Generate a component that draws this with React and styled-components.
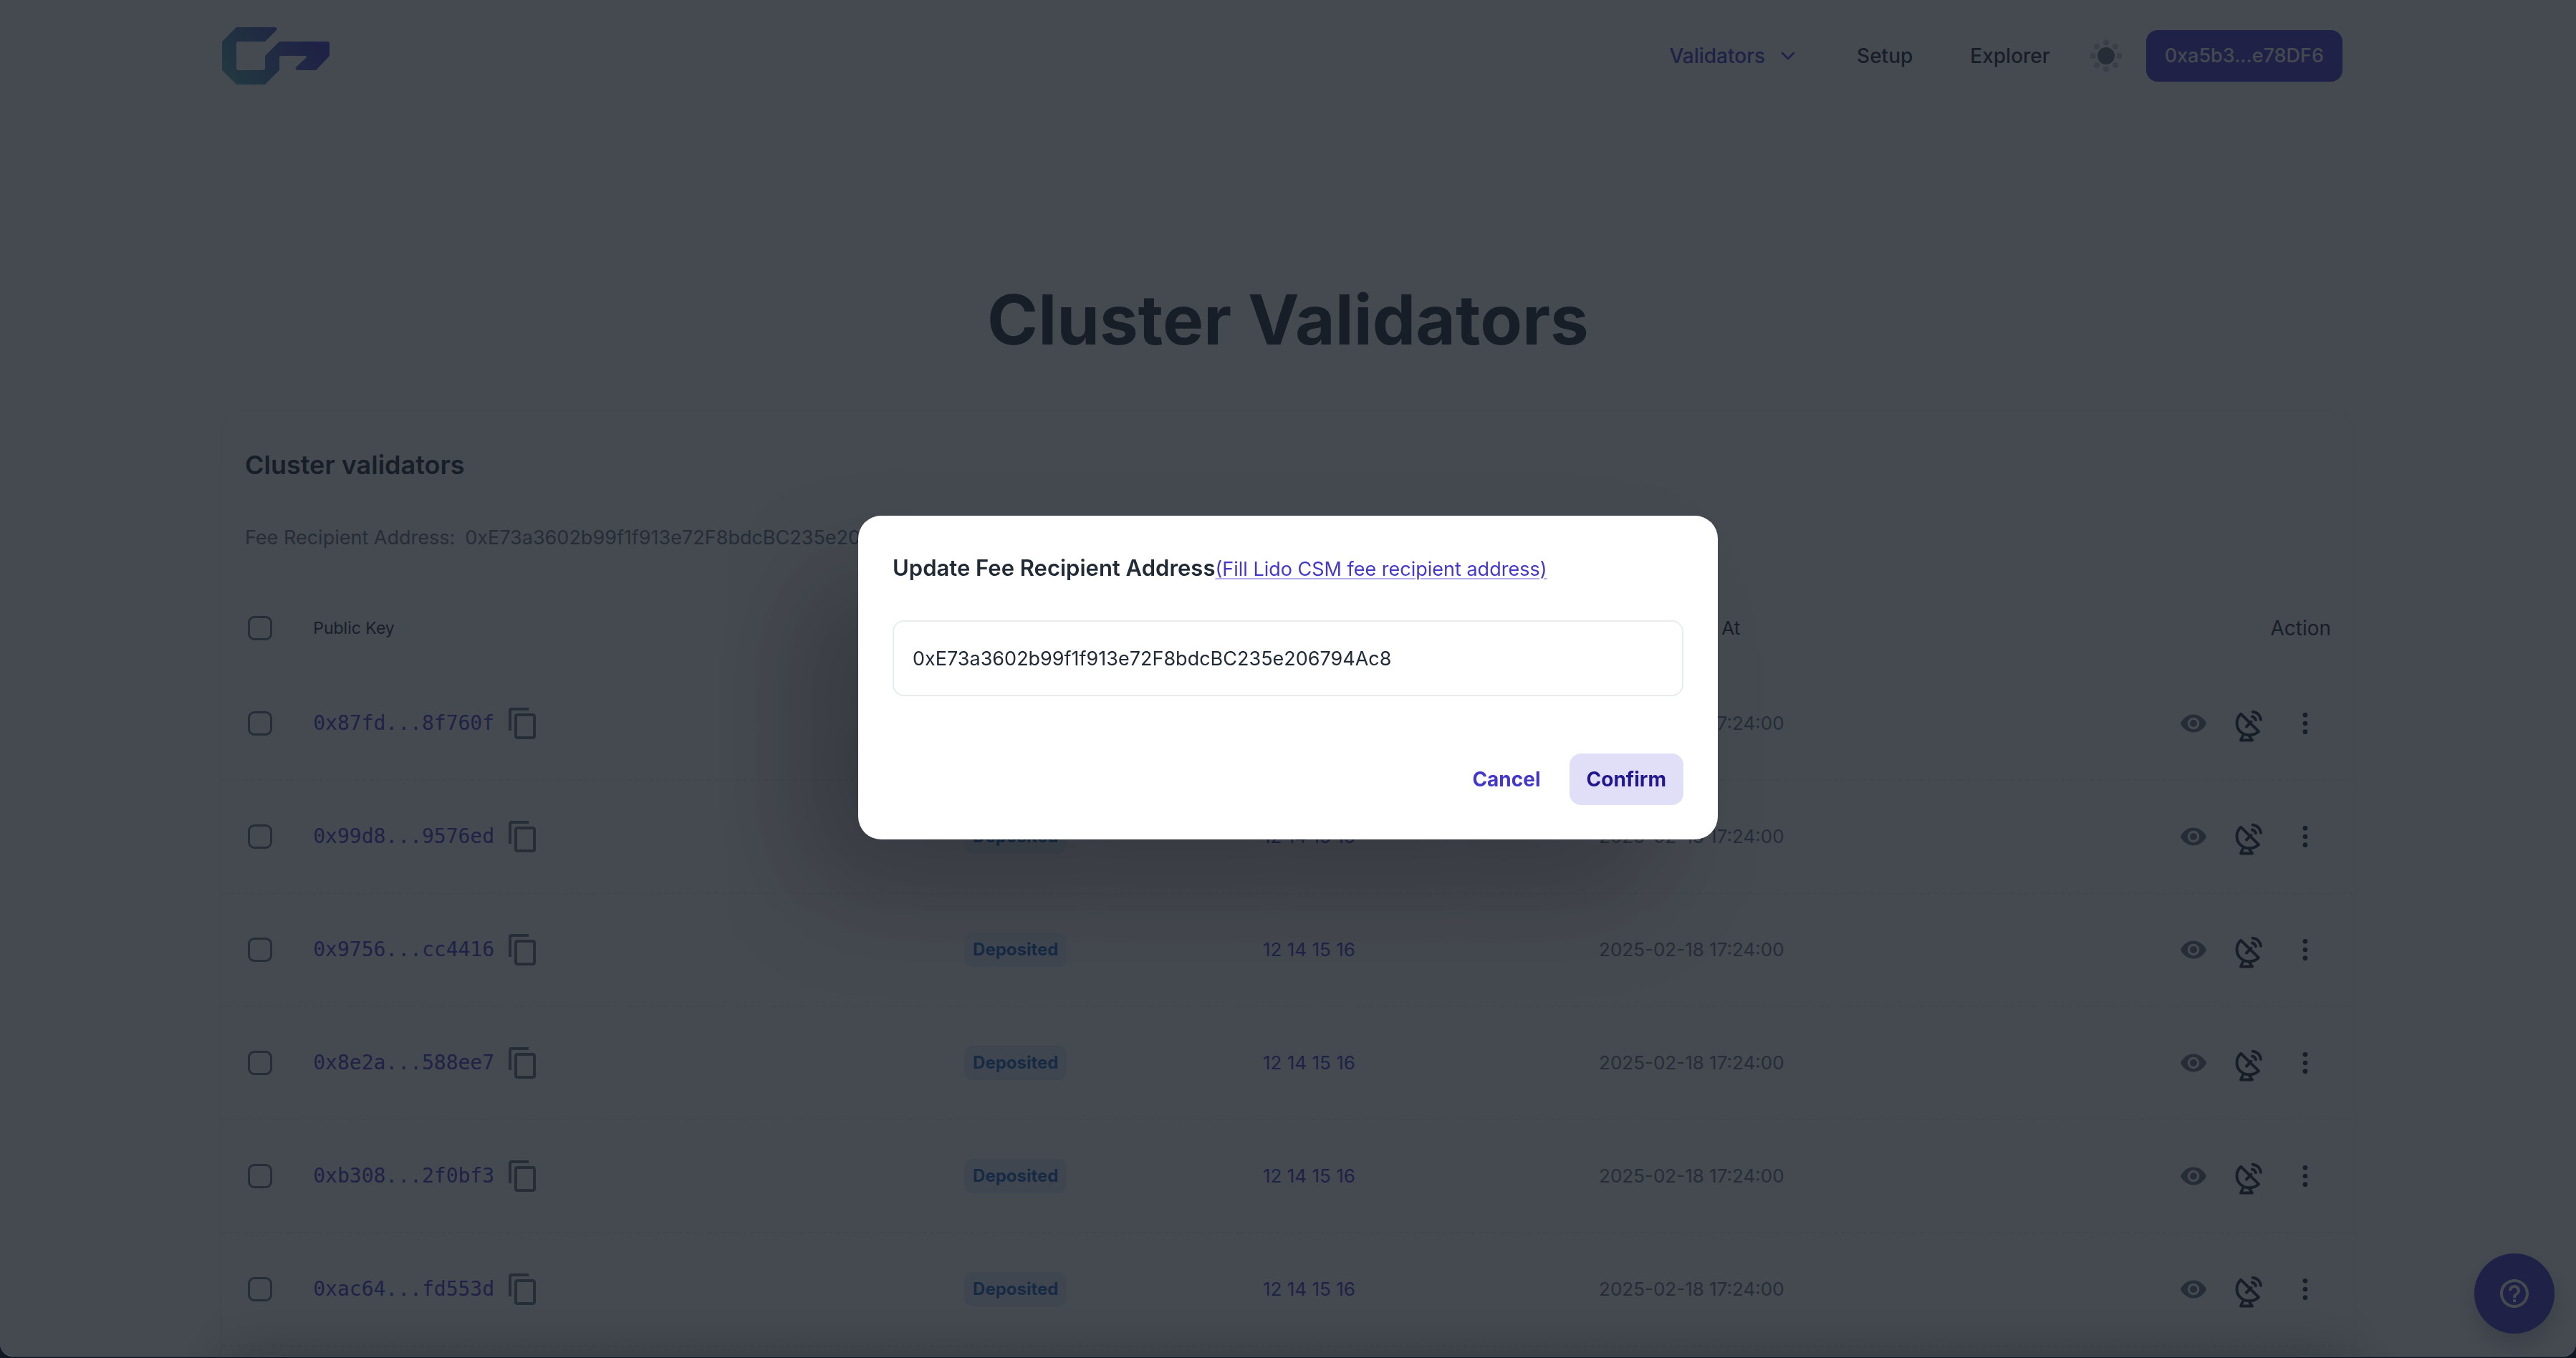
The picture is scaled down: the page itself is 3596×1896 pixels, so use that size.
import React from "react";
import styled, { createGlobalStyle } from "styled-components";
import { ChevronDown } from "lucide-react";
import { MdContentCopy, MdHelpOutline } from "react-icons/md";

const color = {
  primary: "#4338ca",
  primaryDark: "#21188f",
  primarySoft: "#e1dff7",
  text: "#212b36",
  muted: "#637381",
  line: "#e8ecef",
  info: "#1565c0",
};

const GlobalStyle = createGlobalStyle`
  *, *::before, *::after { box-sizing: border-box; }
  html, body { height: 100%; }
  body {
    margin: 0;
    overflow: hidden;
    background: #ffffff;
    color: ${color.text};
    font-family: Inter, "Noto Sans", sans-serif;
    font-size: 27px;
    line-height: 42px;
  }
  button, input { font: inherit; color: inherit; }
  button { border: 0; padding: 0; background: none; cursor: pointer; }
  a { color: inherit; text-decoration: none; }
`;

const Container = styled.div`
  width: 100%;
  max-width: 3072px;
  margin: 0 auto;
  padding: 0 48px;
`;

const Header = styled.header`
  display: flex;
  align-items: center;
  justify-content: space-between;
  height: 156px;
  padding-right: 16px;
`;

const Logo = styled.svg`
  display: block;
  width: 150px;
  height: 80px;
`;

const Tools = styled.div`
  display: flex;
  align-items: center;
  gap: 16px;
`;

const Nav = styled.nav`
  display: flex;
  align-items: center;
  gap: 80px;
  margin-right: 22px;
`;

const NavLink = styled.a`
  display: flex;
  align-items: center;
  gap: 16px;
  font-size: 28px;
  font-weight: 500;
  color: ${(p) => (p.$active ? color.primary : color.text)};
`;

const ThemeButton = styled.button`
  display: grid;
  place-items: center;
  width: 80px;
  height: 80px;
`;

const Button = styled.button`
  height: 72px;
  padding: 0 ${(p) => (p.$strong ? 24 : 26)}px;
  border-radius: 16px;
  font-size: ${(p) => (p.$strong ? 28 : 27)}px;
  font-weight: ${(p) => (p.$strong ? 700 : 500)};
  color: ${(p) => (p.$kind === "solid" ? "#ffffff" : p.$kind === "soft" ? color.primaryDark : color.primary)};
  background: ${(p) => (p.$kind === "solid" ? color.primary : p.$kind === "soft" ? color.primarySoft : "transparent")};
`;

const PageTitle = styled.h1`
  margin: 0;
  padding: 230px 0 68px;
  font-size: 96px;
  line-height: 120px;
  font-weight: 700;
  text-align: center;
`;

const Card = styled.section`
  padding-top: 48px;
  border-radius: 32px;
  background: #ffffff;
  box-shadow: 0 0 4px rgba(145, 158, 171, 0.2), 0 24px 48px -8px rgba(145, 158, 171, 0.08);
`;

const CardTitle = styled.h2`
  margin: 0;
  padding: 0 32px;
  font-size: 36px;
  line-height: 54px;
  font-weight: 600;
`;

const Recipient = styled.p`
  display: flex;
  gap: 14px;
  margin: 0;
  padding: 54px 32px 50px;
  color: ${color.muted};
`;

const Table = styled.table`
  width: 100%;
  table-layout: fixed;
  border-collapse: separate;
  border-spacing: 0;
`;

const HeadCell = styled.th`
  height: 110px;
  padding: 0 32px;
  font-size: ${(p) => p.$size || 26}px;
  font-weight: 400;
  text-align: ${(p) => (p.$right ? "right" : "left")};
  white-space: nowrap;
`;

const Cell = styled.td`
  height: 158px;
  padding: 0 32px;
  border-bottom: 2px dashed rgba(145, 158, 171, 0.16);
  font-size: 26px;
  color: ${(p) => (p.$accent ? color.primary : color.muted)};
  white-space: nowrap;
`;

const Checkbox = styled.input.attrs({ type: "checkbox" })`
  appearance: none;
  display: block;
  width: 34px;
  height: 34px;
  margin: 0 0 0 4px;
  border: 3px solid ${color.muted};
  border-radius: 9px;
`;

const KeyGroup = styled.div`
  display: flex;
  align-items: center;
  gap: 16px;
`;

const KeyLink = styled.a`
  font-family: "DejaVu Sans Mono", monospace;
  font-size: 28px;
  color: ${color.primary};
`;

const CopyButton = styled.button`
  display: flex;
  color: ${color.muted};
`;

const Badge = styled.span`
  display: inline-flex;
  align-items: center;
  height: 48px;
  padding: 0 12px;
  border-radius: 12px;
  background: rgba(24, 119, 242, 0.1);
  color: ${color.info};
  font-size: 24px;
  font-weight: 700;
`;

const Actions = styled.div`
  display: flex;
  justify-content: flex-end;
  gap: 6px;
`;

const IconButton = styled.button`
  display: grid;
  place-items: center;
  width: 72px;
  height: 72px;
  color: ${(p) => (p.$muted ? color.muted : color.text)};
`;

const TableFooter = styled.div`
  position: relative;
  height: 120px;
  margin-top: 14px;
  background: #ffffff;
  box-shadow: 0 0 80px rgba(0, 0, 0, 0.36);
`;

const HelpButton = styled.button`
  position: fixed;
  right: 30px;
  bottom: 34px;
  display: grid;
  place-items: center;
  width: 112px;
  height: 112px;
  border-radius: 50%;
  color: #ffffff;
  background: ${color.primary};
  box-shadow: 0 16px 32px rgba(33, 43, 54, 0.24);
`;

const Backdrop = styled.div`
  position: fixed;
  inset: 0;
  display: grid;
  place-items: center;
  padding-bottom: 4px;
  background: rgba(22, 28, 36, 0.8);
`;

const Dialog = styled.form`
  display: flex;
  flex-direction: column;
  width: 100%;
  max-width: 1200px;
  padding: 48px;
  border-radius: 32px;
  background: #ffffff;
  box-shadow: -80px 80px 160px -16px rgba(0, 0, 0, 0.24);
`;

const DialogHeading = styled.div`
  display: flex;
  align-items: baseline;
  line-height: 50px;
`;

const DialogTitle = styled.label`
  font-size: 31px;
  font-weight: 600;
`;

const FillLink = styled.a`
  color: ${color.primary};
  text-decoration: underline;
  text-decoration-color: rgba(67, 56, 202, 0.4);
  text-decoration-thickness: 2px;
  text-underline-offset: 3px;
`;

const AddressInput = styled.input`
  width: 100%;
  height: 106px;
  margin: 46px 0 80px;
  padding: 0 26px;
  border: 2px solid ${color.line};
  border-radius: 16px;
  outline: 0;
  background: #ffffff;
`;

const DialogActions = styled.div`
  display: flex;
  justify-content: flex-end;
  gap: 16px;
`;

const WindowFrame = styled.div`
  position: fixed;
  inset: 0 0 2px;
  border-bottom: 1px solid #5b5f64;
  border-radius: 0 0 18px 18px;
  box-shadow: 0 0 0 20px #111a24;
  pointer-events: none;
`;

const SunIcon = () => (
  <svg width="48" height="48" viewBox="0 0 48 48" fill={color.muted} aria-hidden="true">
    <circle cx="24" cy="24" r="12" />
    <g opacity="0.36">
      <circle cx="24" cy="5.5" r="4" />
      <circle cx="24" cy="42.5" r="4" />
      <circle cx="5.5" cy="24" r="4" />
      <circle cx="42.5" cy="24" r="4" />
      <circle cx="11" cy="11" r="4" />
      <circle cx="37" cy="11" r="4" />
      <circle cx="11" cy="37" r="4" />
      <circle cx="37" cy="37" r="4" />
    </g>
  </svg>
);

const EyeIcon = () => (
  <svg width="36" height="26" viewBox="0 0 36 26" aria-hidden="true">
    <path
      fill="currentColor"
      fillRule="evenodd"
      d="M18 .5C26.5.5 32 6 35.2 11.1c.9 1.4.9 2.4 0 3.8C32 20 26.500 25.500 18 25.500S4 20 .8 14.900c-.9-1.400-.9-2.400 0-3.800C4 6 9.500.5 18 .5Zm0 4.200a8.300 8.300 0 1 0 0 16.600 8.300 8.300 0 0 0 0-16.600Z"
    />
    <circle cx="18" cy="13" r="5.100" fill="currentColor" />
  </svg>
);

const DishIcon = () => (
  <svg width="40" height="54" viewBox="0 -8 40 54" fill="none" stroke="currentColor" strokeWidth="4" strokeLinecap="round" strokeLinejoin="round" aria-hidden="true">
    <path d="M8.300 5.800 33 30.200C24.500 37.800 13 36.500 6.500 29.500 .8 23 1.200 12 8.300 5.800Z" />
    <path d="M16 23.500 22.500 16.800" />
    <path d="M24 9.500c2.600.6 4.300 2.300 5 4.800" />
    <path d="M24.700 2.700c6.200.6 10.400 4.800 11.300 11" />
    <path d="M11.200 35.500 8 42.500h16l-4-6" />
  </svg>
);

const MoreIcon = () => (
  <svg width="40" height="40" viewBox="0 0 24 24" fill="currentColor" aria-hidden="true">
    <circle cx="12" cy="5" r="2" />
    <circle cx="12" cy="12" r="2" />
    <circle cx="12" cy="19" r="2" />
  </svg>
);

const LogoMark = () => (
  <Logo viewBox="0 0 150 80" role="img" aria-label="Home">
    <defs>
      <linearGradient id="brand" gradientUnits="userSpaceOnUse" x1="20" y1="72" x2="118" y2="0">
        <stop offset="0" stopColor="#4fa3b0" />
        <stop offset="0.5" stopColor="#4668b8" />
        <stop offset="1" stopColor="#4338ca" />
      </linearGradient>
    </defs>
    <path
      fill="url(#brand)"
      fillRule="evenodd"
      d="M20 0H74q4 1 2 4L60 20H23q-3 0-3 3V57q0 3 3 3H57q3 0 3-3V40L80 20H147q3 0 3 3V40L131 60H105q-4-2-1-5L117 43q2-3-1-3H83q-3 0-3 3V60L60 80H20L0 60V20Z"
    />
  </Logo>
);

const validators = ["0x87fd...8f760f", "0x99d8...9576ed", "0x9756...cc4416", "0x8e2a...588ee7", "0xb308...2f0bf3", "0xac64...fd553d"];

const ValidatorRow = ({ name }) => (
  <tr>
    <Cell>
      <Checkbox aria-label={`Select ${name}`} />
    </Cell>
    <Cell>
      <KeyGroup>
        <KeyLink href="#key">{name}</KeyLink>
        <CopyButton type="button" aria-label="Copy">
          <MdContentCopy size={48} />
        </CopyButton>
      </KeyGroup>
    </Cell>
    <Cell>
      <Badge>Deposited</Badge>
    </Cell>
    <Cell $accent>12 14 15 16</Cell>
    <Cell>2025-02-18 17:24:00</Cell>
    <Cell>
      <Actions>
        <IconButton type="button" $muted aria-label="View">
          <EyeIcon />
        </IconButton>
        <IconButton type="button" aria-label="Broadcast">
          <DishIcon />
        </IconButton>
        <IconButton type="button" aria-label="More">
          <MoreIcon />
        </IconButton>
      </Actions>
    </Cell>
  </tr>
);

export default function App() {
  const [address, setAddress] = React.useState("0xE73a3602b99f1f913e72F8bdcBC235e206794Ac8");

  return (
    <>
      <GlobalStyle />
      <Container>
        <Header>
          <a href="#home">
            <LogoMark />
          </a>
          <Tools>
            <Nav>
              <NavLink href="#validators" $active>
                Validators
                <ChevronDown size={32} strokeWidth={2} />
              </NavLink>
              <NavLink href="#setup">Setup</NavLink>
              <NavLink href="#explorer">Explorer</NavLink>
            </Nav>
            <ThemeButton type="button" aria-label="Toggle theme">
              <SunIcon />
            </ThemeButton>
            <Button type="button" $kind="solid">
              0xa5b3...e78DF6
            </Button>
          </Tools>
        </Header>
        <main>
          <PageTitle>Cluster Validators</PageTitle>
          <Card>
            <CardTitle>Cluster validators</CardTitle>
            <Recipient>
              <span>Fee Recipient Address:</span>
              <span>{address}</span>
            </Recipient>
            <Table>
              <colgroup>
                <col style={{ width: "3.2%" }} />
                <col style={{ width: "30.54%" }} />
                <col style={{ width: "14.01%" }} />
                <col style={{ width: "15.76%" }} />
                <col style={{ width: "18%" }} />
                <col />
              </colgroup>
              <thead>
                <tr>
                  <HeadCell>
                    <Checkbox aria-label="Select all" />
                  </HeadCell>
                  <HeadCell $size={23}>Public Key</HeadCell>
                  <HeadCell>Status</HeadCell>
                  <HeadCell>Operators</HeadCell>
                  <HeadCell>Last Updated At</HeadCell>
                  <HeadCell $size={28} $right>
                    Action
                  </HeadCell>
                </tr>
              </thead>
              <tbody>
                {validators.map((name) => (
                  <ValidatorRow key={name} name={name} />
                ))}
              </tbody>
            </Table>
            <TableFooter />
          </Card>
        </main>
      </Container>
      <HelpButton type="button" aria-label="Help">
        <MdHelpOutline size={48} />
      </HelpButton>
      <Backdrop>
        <Dialog role="dialog" aria-modal="true" onSubmit={(e) => e.preventDefault()}>
          <DialogHeading>
            <DialogTitle htmlFor="fee-recipient">Update Fee Recipient Address</DialogTitle>
            <FillLink href="#fill">(Fill Lido CSM fee recipient address)</FillLink>
          </DialogHeading>
          <AddressInput id="fee-recipient" type="text" value={address} onChange={(e) => setAddress(e.target.value)} />
          <DialogActions>
            <Button type="button" $strong>
              Cancel
            </Button>
            <Button type="submit" $kind="soft" $strong>
              Confirm
            </Button>
          </DialogActions>
        </Dialog>
      </Backdrop>
      <WindowFrame />
    </>
  );
}
